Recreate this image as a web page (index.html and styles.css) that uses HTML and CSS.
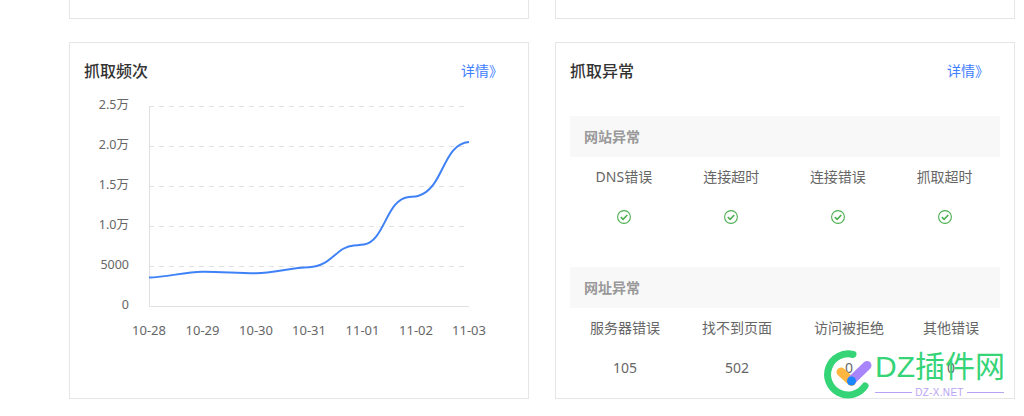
FILE: index.html
```html
<!DOCTYPE html>
<html lang="zh-CN">
<head>
    <meta charset="UTF-8">
    <meta name="viewport" content="width=device-width, initial-scale=1.0">
    <title>抓取诊断</title>
    <link rel="stylesheet" href="styles.css">
</head>
<body>

    <div class="page">
        <!-- Previous row, cut off by the top of the window -->
        <div class="card card-cut"></div>
        <div class="card card-cut"></div>

        <!-- Crawl frequency -->
        <div class="card">
            <div class="card-head">
                <h3>抓取频次</h3>
                <a class="more" href="#">详情》</a>
            </div>
            <svg class="chart" viewBox="70 84 458 314" width="458" height="314">
                <g class="grid">
                    <line x1="149" y1="106.5" x2="466" y2="106.5"></line>
                    <line x1="149" y1="146.5" x2="466" y2="146.5"></line>
                    <line x1="149" y1="186.5" x2="466" y2="186.5"></line>
                    <line x1="149" y1="226.5" x2="466" y2="226.5"></line>
                    <line x1="149" y1="266.5" x2="466" y2="266.5"></line>
                </g>
                <path class="axis" d="M149.5 106V306.5H469"></path>
                <g class="y-labels">
                    <text x="129" y="109">2.5万</text>
                    <text x="129" y="149">2.0万</text>
                    <text x="129" y="189">1.5万</text>
                    <text x="129" y="229">1.0万</text>
                    <text x="129" y="269">5000</text>
                    <text x="129" y="309">0</text>
                </g>
                <g class="x-labels">
                    <text x="149" y="335">10-28</text>
                    <text x="202.5" y="335">10-29</text>
                    <text x="256" y="335">10-30</text>
                    <text x="309" y="335">10-31</text>
                    <text x="362.5" y="335">11-01</text>
                    <text x="416" y="335">11-02</text>
                    <text x="469" y="335">11-03</text>
                </g>
                <path class="line" d="M149 277.5C167 277.2 184 272 202.5 271.7C220 271.5 238 273.3 256 273.2C274 273 291 267.6 309 267.2C332 266.5 336 246.5 354 245.4C358 245.1 360 245.2 364 244.6C385 241 386 199 409 197C412 196.7 415 196.8 418 196C444 189 442 144 469 142"></path>
            </svg>
        </div>

        <!-- Crawl errors -->
        <div class="card">
            <div class="card-head">
                <h3>抓取异常</h3>
                <a class="more" href="#">详情》</a>
            </div>
            <div class="error-group">
                <div class="group-title">网站异常</div>
                <table class="error-table">
                    <tr>
                        <td>DNS错误</td>
                        <td>连接超时</td>
                        <td>连接错误</td>
                        <td>抓取超时</td>
                    </tr>
                    <tr>
                        <td><svg class="ok" viewBox="0 0 14 14"><circle cx="7" cy="7" r="6.4"></circle><path d="M3.8 7.2L6.1 9.3L10.3 5"></path></svg></td>
                        <td><svg class="ok" viewBox="0 0 14 14"><circle cx="7" cy="7" r="6.4"></circle><path d="M3.8 7.2L6.1 9.3L10.3 5"></path></svg></td>
                        <td><svg class="ok" viewBox="0 0 14 14"><circle cx="7" cy="7" r="6.4"></circle><path d="M3.8 7.2L6.1 9.3L10.3 5"></path></svg></td>
                        <td><svg class="ok" viewBox="0 0 14 14"><circle cx="7" cy="7" r="6.4"></circle><path d="M3.8 7.2L6.1 9.3L10.3 5"></path></svg></td>
                    </tr>
                </table>
            </div>
            <div class="error-group">
                <div class="group-title">网址异常</div>
                <table class="error-table url-table">
                    <tr>
                        <td>服务器错误</td>
                        <td>找不到页面</td>
                        <td>访问被拒绝</td>
                        <td>其他错误</td>
                    </tr>
                    <tr>
                        <td>105</td>
                        <td>502</td>
                        <td>0</td>
                        <td>0</td>
                    </tr>
                </table>
            </div>
        </div>
    </div>

    <!-- Site watermark -->
    <div class="watermark">
        <svg class="mark" viewBox="0 0 60 60" width="60" height="60">
            <path class="mark-ring" d="M33 9.5A20.5 20.5 0 1 0 45 41"></path>
            <path class="mark-orange" d="M21 27L31.500 36.500"></path>
            <path class="mark-purple" d="M32 35L47 20.500"></path>
            <circle class="mark-blue" cx="31.500" cy="36" r="4.500"></circle>
        </svg>
        <div class="mark-text">
            <div class="mark-name">DZ插件网</div>
            <div class="mark-sub"><span>DZ-X.NET</span></div>
        </div>
    </div>

</body>
</html>
```

FILE: styles.css
```css
/* General Reset */
* {
    margin: 0;
    padding: 0;
    box-sizing: border-box;
}

body {
    position: relative;
    height: 416px;
    overflow: hidden;
    background: #fff;
    color: #666;
    font-family: "Noto Sans", "Noto Sans CJK SC", sans-serif;
    font-size: 14px;
}

/* Two column page */
.page {
    display: grid;
    grid-template-columns: 460px 460px;
    grid-template-rows: 19px 357px;
    column-gap: 26px;
    row-gap: 23px;
    padding-left: 69px;
}

.card {
    border: 1px solid #e6e6e6;
    background: #fff;
}

.card-cut {
    border-top: none;
}

.card-head {
    display: flex;
    justify-content: space-between;
    align-items: center;
    height: 28px;
    margin: 13px 25px 0 14px;
}

.card-head h3 {
    font-size: 16px;
    font-weight: 500;
    color: #333;
}

.more {
    color: #3f80ff;
    font-size: 14px;
    text-decoration: none;
}

/* Chart */
.chart {
    display: block;
}

.grid line {
    stroke: #e0e0e0;
    stroke-dasharray: 5 5;
}

.axis {
    fill: none;
    stroke: #e0e0e0;
}

.line {
    fill: none;
    stroke: #3f82f8;
    stroke-width: 2;
}

.y-labels text {
    fill: #666;
    font-size: 12.500px;
    text-anchor: end;
}

.x-labels text {
    fill: #666;
    font-size: 13px;
    text-anchor: middle;
}

/* Error tables */
.error-group {
    margin: 32px 14px 0;
}

.error-group + .error-group {
    margin-top: 30px;
}

.group-title {
    height: 41px;
    line-height: 41px;
    padding-left: 14px;
    background: #f8f8f8;
    color: #999;
    font-weight: 700;
}

.error-table {
    width: 428px;
    border-collapse: collapse;
}

.error-table td {
    height: 40px;
    padding-bottom: 2px;
    text-align: center;
    vertical-align: middle;
    color: #666;
}

.url-table {
    table-layout: fixed;
}

.url-table td:nth-child(1),
.url-table td:nth-child(3) {
    width: 110px;
}

.url-table td:nth-child(2) {
    width: 114px;
}

.ok {
    display: block;
    width: 14px;
    height: 14px;
    margin: 2px auto 0;
}

.ok circle {
    fill: none;
    stroke: #4caf50;
    stroke-width: 1.1;
}

.ok path {
    fill: none;
    stroke: #4caf50;
    stroke-width: 1.6;
}

/* Watermark */
.watermark {
    position: absolute;
    left: 820px;
    top: 345px;
    display: flex;
}

.mark {
    flex: none;
}

.mark-ring {
    fill: none;
    stroke: #35d477;
    stroke-width: 7;
    stroke-linecap: round;
}

.mark-orange,
.mark-purple {
    fill: none;
    stroke-width: 9;
    stroke-linecap: round;
}

.mark-orange {
    stroke: #ffb640;
}

.mark-purple {
    stroke: #a985fb;
}

.mark-blue {
    fill: #1b87fb;
}

.mark-text {
    width: 129px;
    margin-left: -5px;
    padding-top: 4px;
}

.mark-name {
    height: 36px;
    line-height: 36px;
    color: #35d477;
    font-family: "Liberation Sans", "Noto Sans CJK SC", sans-serif;
    font-size: 30px;
    white-space: nowrap;
}

.mark-sub {
    display: flex;
    align-items: center;
    gap: 3px;
    height: 14px;
    color: #b9a3f5;
    font-family: "Liberation Sans", sans-serif;
    font-size: 10px;
    letter-spacing: 0.3px;
}

.mark-sub::before,
.mark-sub::after {
    content: "";
    flex: 1;
    height: 1px;
    background: #b9a3f5;
}
```
